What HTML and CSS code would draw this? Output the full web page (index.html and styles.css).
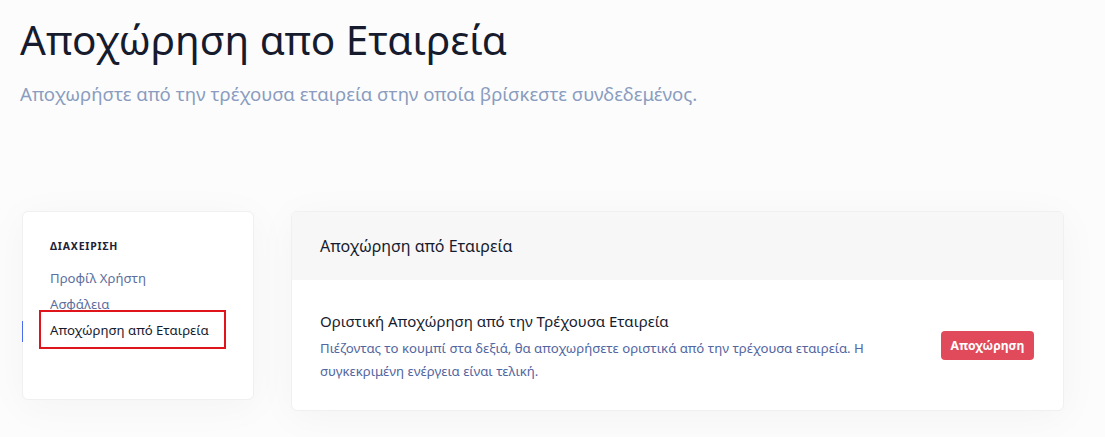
FILE: index.html
```html
<!DOCTYPE html>
<html lang="el">
<head>
<meta charset="utf-8">
<link rel="stylesheet" href="styles.css">
</head>
<body>
<div class="page">
  <header class="page-head">
    <h1 class="page-title">Αποχώρηση απο Εταιρεία</h1>
    <p class="page-sub">Αποχωρήστε από την τρέχουσα εταιρεία στην οποία βρίσκεστε συνδεδεμένος.</p>
  </header>
  <div class="layout">
    <aside class="side-card">
      <div class="side-label">ΔΙΑΧΕΙΡΙΣΗ</div>
      <nav class="side-nav">
        <a class="side-link">Προφίλ Χρήστη</a>
        <a class="side-link">Ασφάλεια</a>
        <a class="side-link active">Αποχώρηση από Εταιρεία</a>
      </nav>
    </aside>
    <section class="main-card">
      <div class="main-head">Αποχώρηση από Εταιρεία</div>
      <div class="main-body">
        <div class="row-text">
          <div class="row-title">Οριστική Αποχώρηση από την Τρέχουσα Εταιρεία</div>
          <div class="row-desc">Πιέζοντας το κουμπί στα δεξιά, θα αποχωρήσετε οριστικά από την τρέχουσα εταιρεία. Η συγκεκριμένη ενέργεια είναι τελική.</div>
        </div>
        <button class="btn-danger">Αποχώρηση</button>
      </div>
    </section>
  </div>
</div>
</body>
</html>
```
FILE: styles.css
```css
* { box-sizing: border-box; }
html, body { margin: 0; padding: 0; }
body {
  background: #fcfcfc;
  font-family: "Noto Sans", "Open Sans", sans-serif;
  color: #161b2e;
  width: 1105px;
  height: 437px;
  overflow: hidden;
}
.page { padding: 12px 0 0 20px; }
.page-title {
  margin: 0;
  font-size: 40.5px;
  font-weight: 400;
  line-height: 56px;
  color: #161b2e;
}
.page-sub {
  margin: 13px 0 0 0;
  font-size: 18.6px;
  line-height: 26px;
  color: #8a9cbf;
}
.layout {
  display: flex;
  align-items: flex-start;
  gap: 37px;
  margin-top: 104px;
  padding-left: 2px;
}
.side-card {
  width: 232px;
  height: 189px;
  background: #fff;
  border: 1px solid #f0f0f0;
  border-radius: 6px;
  box-shadow: 0 6px 40px rgba(0,0,0,0.04);
  padding: 27px 0 0 0;
}
.side-label {
  font-size: 10.5px;
  font-weight: 700;
  letter-spacing: 0.8px;
  color: #1d2238;
  padding-left: 27px;
}
.side-nav {
  display: flex;
  flex-direction: column;
  margin-top: 12px;
}
.side-link {
  font-size: 13.2px;
  line-height: 26px;
  color: #5d6f9e;
  padding-left: 27px;
}
.side-link.active {
  color: #161b2e;
  position: relative;
}
.side-link.active::before {
  content: "";
  position: absolute;
  left: -1px;
  top: 4px;
  width: 1px;
  height: 21px;
  background: #4a6cf0;
}
.side-link.active::after {
  content: "";
  position: absolute;
  left: 16px;
  top: -7px;
  width: 183px;
  height: 35px;
  border: 2px solid #e0151b;
}
.main-card {
  width: 773px;
  height: 200px;
  background: #fff;
  border: 1px solid #f0f0f0;
  border-radius: 6px;
  box-shadow: 0 6px 40px rgba(0,0,0,0.04);
  overflow: hidden;
}
.main-head {
  height: 68px;
  background: #f7f7f7;
  padding: 0 28px;
  display: flex;
  align-items: center;
  font-size: 16px;
  color: #161b2e;
}
.main-body {
  display: flex;
  align-items: center;
  justify-content: space-between;
  padding: 30px 29px 0 28px;
}
.row-text { width: 570px; }
.row-title {
  font-size: 15px;
  line-height: 22px;
  color: #161b2e;
}
.row-desc {
  margin-top: 5px;
  font-size: 13.2px;
  line-height: 23px;
  color: #5266a0;
}
.btn-danger {
  background: #e04a5b;
  color: #fff;
  border: none;
  border-radius: 4px;
  font-family: "Noto Sans", sans-serif;
  font-weight: 700;
  font-size: 12.2px;
  height: 29px;
  width: 93px;
  padding: 0;
  margin-top: -2px;
}
```
